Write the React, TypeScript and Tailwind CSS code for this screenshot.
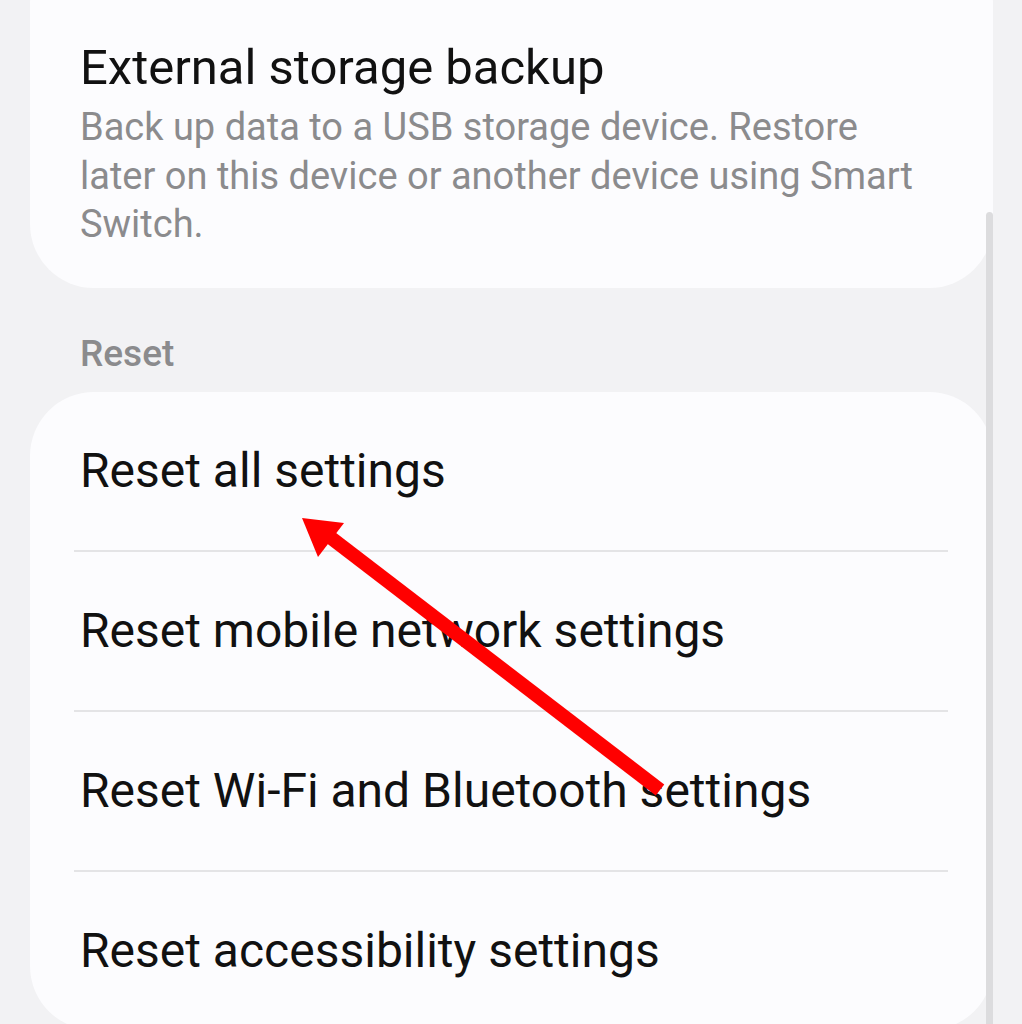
const rows = [
  "Reset all settings",
  "Reset mobile network settings",
  "Reset Wi-Fi and Bluetooth settings",
  "Reset accessibility settings",
];

function Arrow() {
  return (
    <svg
      className="absolute left-0 top-0 pointer-events-none"
      width="1022"
      height="1024"
      viewBox="0 0 1022 1024"
    >
      <line x1="326" y1="534" x2="660" y2="790" stroke="#ff0000" strokeWidth="14" />
      <polygon points="302,518 344,523 318,557" fill="#ff0000" />
    </svg>
  );
}

export default function App() {
  return (
    <div
      className="relative h-[1024px] w-[1022px] overflow-hidden bg-[#f2f2f4]"
      style={{ fontFamily: "Roboto, 'Noto Sans', sans-serif" }}
    >
      <div className="ml-[30px] w-[963px] -mt-[60px] rounded-[64px] bg-[#fcfcfe] pl-[50px] pr-[40px] pt-[100px] pb-[39px]">
        <div className="text-[49px] leading-[56px] text-[#111]">External storage backup</div>
        <div className="mt-[7px] text-[38px] leading-[48.5px] text-[#8b8b8d]">
          Back up data to a USB storage device. Restore
          <br />
          later on this device or another device using Smart
          <br />
          Switch.
        </div>
      </div>

      <div className="ml-[80px] mt-[46px] text-[37px] font-medium leading-[40px] text-[#8b8b8d]">Reset</div>

      <div className="ml-[30px] mt-[18px] w-[963px] rounded-[64px] bg-[#fcfcfe] pl-[44px] pr-[45px]">
        {rows.map((r, i) => (
          <div key={r}>
            {i > 0 && <div className="h-[2px] bg-[#e4e4e6]" />}
            <div className="flex h-[158px] items-center pl-[6px] text-[48px] text-[#111]">{r}</div>
          </div>
        ))}
      </div>

      <div className="absolute left-[986px] top-[212px] h-[820px] w-[7px] rounded-full bg-[#dcdcde]" />
      <Arrow />
    </div>
  );
}
